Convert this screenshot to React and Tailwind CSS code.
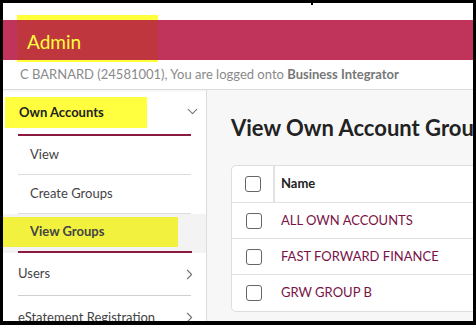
import { ChevronDown, ChevronRight } from 'lucide-react'

const ROWS = ['ALL OWN ACCOUNTS', 'FAST FORWARD FINANCE', 'GRW GROUP B']

function Box() {
  return <span className="block w-[16px] h-[16px] rounded-[3px] border border-[#666] bg-white" />
}

export default function App() {
  return (
    <div className="w-[476px] h-[325px] bg-black pt-[3px] pl-[3px] pr-[3px] pb-[4px] overflow-hidden" style={{ fontFamily: 'Lato, "Noto Sans", sans-serif' }}>
      <div className="relative w-full h-full bg-white flex flex-col overflow-hidden">
        {/* tiny mark at top */}
        <span className="absolute left-[308px] top-0 w-[2px] h-[2px] bg-black" />

        <div className="h-[17px] shrink-0" />
        <div className="h-[40px] shrink-0 bg-[#c0345c]" />

        {/* highlighter over header */}
        <div className="absolute left-[14px] top-[12px] w-[141px] h-[47px] border-t-[5px] border-b-[2px] border-[#ffff3a] bg-[#c0363f] flex items-center pl-[10px]">
          <span className="text-[19px] text-[#ffff3a] leading-none mt-[2px]">Admin</span>
        </div>

        <div className="h-[30px] shrink-0 flex items-center pl-[17px] pt-[1px] text-[13px] text-[#8a8a8a] border-b border-[#dcdcdc] shadow-[0_1px_2px_rgba(0,0,0,0.06)]">
          <span>C BARNARD (24581001), You are logged onto <b className="font-bold text-[#777]">Business Integrator</b></span>
        </div>

        <div className="flex flex-1 min-h-0">
          {/* sidebar */}
          <div className="w-[204px] shrink-0 border-r border-[#dcdcdc] flex flex-col pt-[1px] text-[13px] text-[#444]">
            <div className="relative h-[45px] shrink-0 mx-[15px] border-b-2 border-[#8b1a3f] flex items-center justify-end">
              <div className="absolute left-[-13px] top-[6px] w-[142px] h-[31px] bg-[#ffff40] flex items-center pl-[14px]">
                <span className="font-bold text-[#222]">Own Accounts</span>
              </div>
              <ChevronDown size={17} strokeWidth={1.6} className="text-[#777] mr-[-10px] mb-[2px]" />
            </div>
            <div className="h-[39px] shrink-0 mx-[15px] border-b border-[#dcdcdc] flex items-center pl-[12px]">View</div>
            <div className="h-[39px] shrink-0 mx-[15px] border-b border-[#dcdcdc] flex items-center pl-[12px]">Create Groups</div>
            <div className="relative h-[39px] shrink-0 bg-[#f3f3f3]">
              <div className="absolute left-0 top-[3px] w-[175px] h-[30px] bg-[#f2f23e] flex items-center pl-[27px]">
                <span className="font-bold text-[#444]">View Groups</span>
              </div>
              <div className="absolute left-[15px] right-[14px] bottom-0 h-[2px] bg-[#8b1a3f]" />
            </div>
            <div className="h-[43px] shrink-0 mx-[15px] border-b border-[#cfcfcf] flex items-center justify-between">
              <span>Users</span>
              <ChevronRight size={17} strokeWidth={1.6} className="text-[#777] mr-[-7px]" />
            </div>
            <div className="h-[43px] shrink-0 mx-[15px] flex items-center justify-between">
              <span>eStatement Registration</span>
              <ChevronRight size={17} strokeWidth={1.6} className="text-[#777] mr-[-7px]" />
            </div>
          </div>

          {/* main */}
          <div className="flex-1 min-w-0 bg-[#f7f7f7] pl-[24px] pt-[27px]">
            <h1 className="text-[22px] font-bold text-[#222] whitespace-nowrap leading-none">View Own Account Groups</h1>
            <div className="mt-[26px] w-[300px] bg-white border border-[#dedede] rounded-[5px] text-[13px]">
              <div className="h-[37px] flex items-stretch border-b border-[#e2e2e2]">
                <div className="w-[43px] flex items-center justify-center border-r-2 border-[#e2e2e2]"><Box /></div>
                <div className="flex items-center pl-[6px] font-bold text-[#222]">Name</div>
              </div>
              {ROWS.map((r, i) => (
                <div key={r} className={`h-[36px] flex items-center ${i < ROWS.length - 1 ? 'border-b border-[#e2e2e2]' : ''}`}>
                  <div className="w-[43px] flex justify-center"><Box /></div>
                  <span className="pl-[6px] text-[#7a1245]">{r}</span>
                </div>
              ))}
            </div>
          </div>
        </div>
      </div>
    </div>
  )
}
